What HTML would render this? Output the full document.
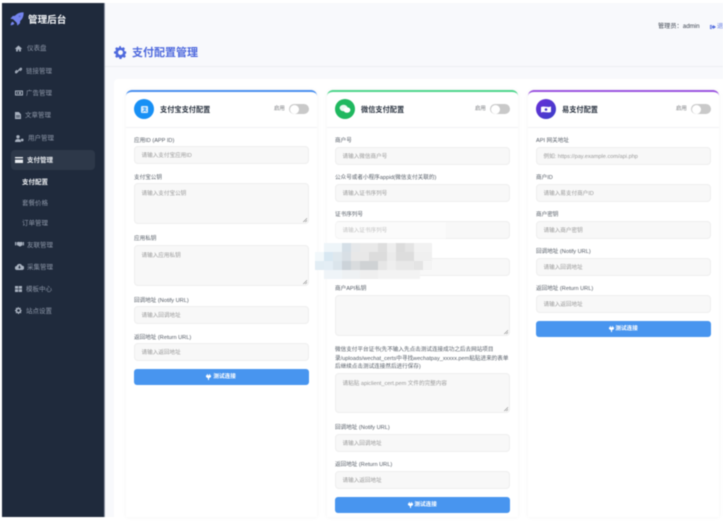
<!DOCTYPE html>
<html lang="zh-CN">
<head>
<meta charset="utf-8">
<title>支付配置管理</title>
<style>
html,body{margin:0;padding:0;background:#fff;}
body{width:723px;height:526px;overflow:hidden;position:relative;font-family:"Liberation Sans","Noto Sans CJK SC",sans-serif;}
#p{position:absolute;left:0;top:0;width:723px;height:526px;overflow:hidden;filter:blur(.4px);}
#p div,#p svg{position:absolute;}
#p div{white-space:nowrap;}
.nv{color:#8d97a8;font-size:6.5px;line-height:10px;height:10px;margin-top:1px;}
.ic{fill:#a9b2c0;}
.card{background:#fff;width:191px;height:427px;top:90px;border-top:2px solid;border-radius:6px 6px 0 0;box-sizing:border-box;box-shadow:0 0 5px rgba(0,0,0,.05);}
.hl{height:1px;width:191px;background:#f1f2f4;top:127px;}
.l{color:#555c66;font-size:5.6px;line-height:8px;height:8px;margin-top:1px;}
.f{width:175px;height:18px;background:#f8f8f8;border:.6px solid #eeeeee;border-radius:4px;box-sizing:border-box;color:#999;font-size:5.6px;line-height:18px;padding-left:6.5px;}
.t{height:41px;line-height:8px;padding-top:6px;}
.t::after{content:"";position:absolute;right:1.5px;bottom:1.5px;width:4px;height:4px;background:linear-gradient(135deg,transparent 50%,#999 50%,#999 60%,transparent 60%,transparent 75%,#999 75%,#999 85%,transparent 85%);}
.btn{width:175px;height:16px;background:#4895ef;border-radius:3px;color:#fff;font-size:5.6px;line-height:17px;text-align:center;font-weight:700;}
.tt{color:#2a3340;font-size:7.2px;font-weight:700;line-height:12px;height:12px;top:104px;}
.en{color:#77797d;font-size:5.4px;line-height:8px;top:105px;}
.tg{width:20px;height:10px;border-radius:5px;background:#c9c9c9;top:104px;}
.tg i{position:absolute;left:1px;top:.5px;width:9px;height:9px;background:#fff;border-radius:50%;}
.cir{width:20px;height:20px;border-radius:50%;top:99px;}
.m{height:9px;}
</style>
</head>
<body>
<div id="p">
  <!-- background -->
  <div style="left:2px;top:3px;width:721px;height:514px;background:#f8f9fc"></div>
  <div style="left:104px;top:66px;width:619px;height:1px;background:#eceef2"></div>
  <div style="left:104px;top:3px;width:1px;height:514px;background:#8c94a3"></div>
  <div style="left:114px;top:79px;width:609px;height:438px;background:#fff;border-radius:4px 0 0 0"></div>

  <!-- sidebar -->
  <div style="left:2px;top:3px;width:102px;height:514px;background:#1f2a3c"></div>
  <svg style="left:10px;top:12px" width="14" height="14" viewBox="0 0 14 14"><path fill="#7484ee" d="M13.6.4C10 .2 7 1.4 5 3.8L2.7 4 .4 6.6l2.7.6 3.7 3.7.6 2.7 2.6-2.3.2-2.3c2.4-2 3.6-5 3.4-8.6zM2.6 9.6C1.4 10 .8 11.4.6 13.4c2-.2 3.4-.8 3.8-2z"/><circle cx="9.6" cy="4.4" r="1" fill="#5a68c8"/></svg>
  <div style="left:28px;top:13.5px;color:#f2f4f7;font-size:9.6px;font-weight:700;line-height:13px">管理后台</div>

  <div style="left:11px;top:150px;width:84px;height:20px;background:#2d3849;border-radius:4px"></div>

  <svg class="ic" style="left:15px;top:45px" width="7" height="7" viewBox="0 0 7 7"><path d="M3.5.5 0 3.6l.5.5.6-.5V6.5h1.8V4.6h1.2v1.9h1.8V3.6l.6.5.5-.5z"/></svg>
  <div class="nv" style="left:27px;top:43px">仪表盘</div>
  <svg class="ic" style="left:15px;top:67px" width="7" height="7" viewBox="0 0 7 7"><path fill="none" stroke="#a9b2c0" stroke-width="1.2" d="M3 4.2 1.6 5.6a.7.7 0 0 1-1-1L2 3.2M4 2.8 5.4 1.4a.7.7 0 0 1 1 1L5 3.8M2.6 4.4l1.8-1.8"/></svg>
  <div class="nv" style="left:26px;top:66px">链接管理</div>
  <svg class="ic" style="left:15px;top:90px" width="8" height="6" viewBox="0 0 8 6"><path fill-rule="evenodd" d="M0 .5h8v5H0zM1 1.5v3h6v-3z"/><path d="M2 2h1v2H2zM4 2h2v2H4z"/></svg>
  <div class="nv" style="left:26px;top:88px">广告管理</div>
  <svg class="ic" style="left:15px;top:112px" width="6" height="7" viewBox="0 0 6 7"><path d="M0 0h3.8L6 2.2V7H0z"/><path fill="#1f2a3c" d="M1 3.4h4v.6H1zM1 4.8h4v.6H1z"/></svg>
  <div class="nv" style="left:25px;top:110px">文章管理</div>
  <svg class="ic" style="left:15px;top:135px" width="9" height="7" viewBox="0 0 9 7"><circle cx="3" cy="1.8" r="1.7"/><path d="M0 7c0-2 1-3 3-3s3 1 3 3z"/><circle cx="7.2" cy="5" r="1.4"/></svg>
  <div class="nv" style="left:28px;top:133px">用户管理</div>
  <svg style="left:15px;top:157px" width="8" height="6" viewBox="0 0 8 6"><path fill="#e8ebef" d="M0 0h8v1.4H0zM0 2.6h8V6H0z"/></svg>
  <div class="nv" style="left:27px;top:155px;color:#e9ecf0;font-weight:700">支付管理</div>

  <div class="nv" style="left:22px;top:177px;color:#f0f2f5;font-weight:700">支付配置</div>
  <div class="nv" style="left:22px;top:198px">套餐价格</div>
  <div class="nv" style="left:22px;top:218px">订单管理</div>

  <svg class="ic" style="left:15px;top:241px" width="9" height="6" viewBox="0 0 9 6"><path d="M0 1h1.2v3.4H0zM7.8 1H9v3.4H7.8zM1.8 1.2 4 .8l1 .5 1-.5 1.4.4v3L5 5.6 1.8 4z"/></svg>
  <div class="nv" style="left:27px;top:240px">友联管理</div>
  <svg class="ic" style="left:15px;top:263px" width="9" height="7" viewBox="0 0 9 7"><path d="M2 7a2 2 0 0 1-.3-4A2.8 2.8 0 0 1 7 2.6 2.2 2.2 0 0 1 7 7z"/><path fill="#1f2a3c" d="M4 2.6h1v1.6h1L4.5 5.8 3 4.2h1z"/></svg>
  <div class="nv" style="left:27px;top:262px">采集管理</div>
  <svg class="ic" style="left:15px;top:286px" width="7" height="6" viewBox="0 0 7 6"><path d="M0 0h3.2v2.6H0zM3.8 0H7v2.6H3.8zM0 3.2h3.2V6H0zM3.8 3.2H7V6H3.8z"/></svg>
  <div class="nv" style="left:26px;top:284px">模板中心</div>
  <svg class="ic" style="left:15px;top:307px" width="7" height="7" viewBox="0 0 16 16"><path d="M15 9.3V6.7l-2-.4-.6-1.4 1.1-1.7-1.8-1.8-1.7 1.1-1.4-.6L8.3 0H6.7l-.4 1.9-1.4.6-1.7-1.1-1.8 1.8 1.1 1.7-.6 1.4L0 6.7v2.6l1.9.4.6 1.4-1.1 1.7 1.8 1.8 1.7-1.1 1.4.6.4 1.9h2.6l.4-1.9 1.4-.6 1.7 1.1 1.8-1.8-1.1-1.7.6-1.4zM8 11a3 3 0 1 1 0-6 3 3 0 0 1 0 6z"/></svg>
  <div class="nv" style="left:26px;top:306px">站点设置</div>

  <!-- top bar -->
  <div style="left:658px;top:23px;color:#3d4450;font-size:6.2px;line-height:8px">管理员：admin</div>
  <svg style="left:710px;top:24px" width="6" height="6" viewBox="0 0 6 6"><path fill="#4e69dd" d="M0 1h2v.8H.8v2.4H2V5H0zM3 1l3 2-3 2V3.8H1.4V2.2H3z"/></svg>
  <div style="left:717px;top:23px;color:#6a80e4;font-size:6.2px;line-height:8px">退出</div>

  <!-- title -->
  <svg style="left:114px;top:46px" width="13" height="13" viewBox="0 0 16 16"><path fill="#4e69dd" d="M15 9.3V6.7l-2-.4-.6-1.4 1.1-1.7-1.8-1.8-1.7 1.1-1.4-.6L8.3 0H6.7l-.4 1.9-1.4.6-1.7-1.1-1.8 1.8 1.1 1.7-.6 1.4L0 6.7v2.6l1.9.4.6 1.4-1.1 1.7 1.8 1.8 1.7-1.1 1.4.6.4 1.9h2.6l.4-1.9 1.4-.6 1.7 1.1 1.8-1.8-1.1-1.7.6-1.4zM8 11a3 3 0 1 1 0-6 3 3 0 0 1 0 6z"/></svg>
  <div style="left:132px;top:46px;color:#4e69dd;font-size:11px;font-weight:700;line-height:15px">支付配置管理</div>

  <!-- card 1 -->
  <div class="card" style="left:126px;border-color:#4a90f0"></div>
  <div class="hl" style="left:126px"></div>
  <div class="cir" style="left:134px;background:#1890f5"></div>
  <svg style="left:140.5px;top:106px" width="7" height="7" viewBox="0 0 8 8"><rect width="8" height="8" rx="1.2" fill="#d8ecfd"/><path fill="none" stroke="#1890f5" stroke-width=".8" d="M2 2.2h4M4 1.4v2.4M1.6 6.4C3.4 6 5 5 5.6 2.8M3 4.4l3.6 2"/></svg>
  <div class="tt" style="left:160px">支付宝支付配置</div>
  <div class="en" style="left:274px">启用</div>
  <div class="tg" style="left:289px"><i></i></div>

  <div class="l" style="left:134px;top:136px">应用ID (APP ID)</div>
  <div class="f" style="left:134px;top:146px">请输入支付宝应用ID</div>
  <div class="l" style="left:134px;top:173px">支付宝公钥</div>
  <div class="f t" style="left:134px;top:183px">请输入支付宝公钥</div>
  <div class="l" style="left:134px;top:234px">应用私钥</div>
  <div class="f t" style="left:134px;top:245px">请输入应用私钥</div>
  <div class="l" style="left:134px;top:296px">回调地址 (Notify URL)</div>
  <div class="f" style="left:134px;top:306px">请输入回调地址</div>
  <div class="l" style="left:134px;top:333px">返回地址 (Return URL)</div>
  <div class="f" style="left:134px;top:343px">请输入返回地址</div>
  <div class="btn" style="left:134px;top:369px">&nbsp;&nbsp;&nbsp;&nbsp;测试连接</div>
  <svg style="left:206px;top:374px" width="5" height="6" viewBox="0 0 5 6"><path fill="#fff" d="M0 1.2h1V0h.8v1.2h1.4V0H4v1.2h1V3L3 4.2V6H2V4.2L0 3z"/></svg>

  <!-- card 2 -->
  <div class="card" style="left:327px;border-color:#4fd68d"></div>
  <div class="hl" style="left:327px"></div>
  <div class="cir" style="left:335px;background:#1fb85f"></div>
  <svg style="left:339px;top:104px" width="12" height="10" viewBox="0 0 12 10"><ellipse cx="4.6" cy="4" rx="4" ry="3.2" fill="#e8f8ef"/><ellipse cx="8" cy="6" rx="3.4" ry="2.8" fill="#fff"/></svg>
  <div class="tt" style="left:361px">微信支付配置</div>
  <div class="en" style="left:475px">启用</div>
  <div class="tg" style="left:490px"><i></i></div>

  <div class="l" style="left:335px;top:136px">商户号</div>
  <div class="f" style="left:335px;top:147px">请输入微信商户号</div>
  <div class="l" style="left:335px;top:173px">公众号或者小程序appid(微信支付关联的)</div>
  <div class="f" style="left:335px;top:184px">请输入证书序列号</div>
  <div class="l" style="left:335px;top:210px">证书序列号</div>
  <div class="f" style="left:335px;top:221px">请输入证书序列号</div>
  <div class="f" style="left:335px;top:258px"></div>
  <div class="l" style="left:335px;top:284px">商户API私钥</div>
  <div class="f t" style="left:335px;top:295px"></div>
  <div class="l" style="left:335px;top:345px">微信支付平台证书(先不输入先点击测试连接成功之后去网站项目</div>
  <div class="l" style="left:335px;top:354px">录/uploads/wechat_certs中寻找wechatpay_xxxxx.pem粘贴进来的表单</div>
  <div class="l" style="left:335px;top:362px">后继续点击测试连接然后进行保存)</div>
  <div class="f t" style="left:335px;top:373px;height:40px">请粘贴 apiclient_cert.pem 文件的完整内容</div>
  <div class="l" style="left:335px;top:423px">回调地址 (Notify URL)</div>
  <div class="f" style="left:335px;top:434px">请输入回调地址</div>
  <div class="l" style="left:335px;top:460px">返回地址 (Return URL)</div>
  <div class="f" style="left:335px;top:471px">请输入返回地址</div>
  <div class="btn" style="left:335px;top:497px">&nbsp;&nbsp;&nbsp;&nbsp;测试连接</div>
  <svg style="left:408px;top:502px" width="5" height="6" viewBox="0 0 5 6"><path fill="#fff" d="M0 1.2h1V0h.8v1.2h1.4V0H4v1.2h1V3L3 4.2V6H2V4.2L0 3z"/></svg>

  <!-- card 3 -->
  <div class="card" style="left:528px;border-color:#9b55e0"></div>
  <div class="hl" style="left:528px"></div>
  <div class="cir" style="left:536px;background:linear-gradient(135deg,#6a2fd8,#3a3fc8)"></div>
  <svg style="left:541px;top:105.5px" width="10" height="7" viewBox="0 0 10 7"><path fill="#fff" d="M0 1l2-.5 6 .5 2-.5V6l-2 .5-6-.5-2 .5z"/><circle cx="5" cy="3.5" r="1.3" fill="#4a35cc"/></svg>
  <div class="tt" style="left:562px">易支付配置</div>
  <div class="en" style="left:676px">启用</div>
  <div class="tg" style="left:691px"><i></i></div>

  <div class="l" style="left:536px;top:136px">API 网关地址</div>
  <div class="f" style="left:536px;top:147px">例如: https://pay.example.com/api.php</div>
  <div class="l" style="left:536px;top:173px">商户ID</div>
  <div class="f" style="left:536px;top:184px">请输入易支付商户ID</div>
  <div class="l" style="left:536px;top:210px">商户密钥</div>
  <div class="f" style="left:536px;top:221px">请输入商户密钥</div>
  <div class="l" style="left:536px;top:247px">回调地址 (Notify URL)</div>
  <div class="f" style="left:536px;top:258px">请输入回调地址</div>
  <div class="l" style="left:536px;top:284px">返回地址 (Return URL)</div>
  <div class="f" style="left:536px;top:295px">请输入返回地址</div>
  <div class="btn" style="left:536px;top:321px">&nbsp;&nbsp;&nbsp;&nbsp;测试连接</div>
  <svg style="left:609px;top:326px" width="5" height="6" viewBox="0 0 5 6"><path fill="#fff" d="M0 1.2h1V0h.8v1.2h1.4V0H4v1.2h1V3L3 4.2V6H2V4.2L0 3z"/></svg>

  <!-- mosaic -->
  <div style="left:328px;top:222px;width:118px;height:21px;background:rgba(255,255,255,.4)"></div>
  <div class="m" style="left:324px;top:243px;width:18px;background:#eef5f9"></div>
  <div class="m" style="left:342px;top:243px;width:9px;background:#d5dfe7"></div>
  <div class="m" style="left:351px;top:243px;width:9px;background:#e6e8ea"></div>
  <div class="m" style="left:360px;top:243px;width:18px;background:#e9e9e9"></div>
  <div class="m" style="left:378px;top:243px;width:9px;background:#dedede"></div>
  <div class="m" style="left:387px;top:243px;width:9px;background:#eeeeee"></div>
  <div class="m" style="left:396px;top:243px;width:9px;background:#dcdcdc"></div>
  <div class="m" style="left:405px;top:243px;width:9px;background:#e4e4e4"></div>
  <div class="m" style="left:414px;top:243px;width:18px;background:#f2f2f2"></div>
  <div class="m" style="left:315px;top:252px;width:9px;background:#f2f8fb"></div>
  <div class="m" style="left:324px;top:252px;width:9px;background:#d8e8f2"></div>
  <div class="m" style="left:333px;top:252px;width:9px;background:#dfe8ee"></div>
  <div class="m" style="left:342px;top:252px;width:9px;background:#d8dfe5"></div>
  <div class="m" style="left:351px;top:252px;width:18px;background:#e8e8e8"></div>
  <div class="m" style="left:369px;top:252px;width:18px;background:#dcdcdc"></div>
  <div class="m" style="left:387px;top:252px;width:9px;background:#ebebeb"></div>
  <div class="m" style="left:396px;top:252px;width:18px;background:#dddddd"></div>
  <div class="m" style="left:414px;top:252px;width:18px;background:#f0f0f0"></div>
  <div class="m" style="left:315px;top:261px;width:9px;background:#e2edf4"></div>
  <div class="m" style="left:324px;top:261px;width:9px;background:#e4eef5"></div>
  <div class="m" style="left:333px;top:261px;width:9px;background:#dbe5ec"></div>
  <div class="m" style="left:342px;top:261px;width:9px;background:#ccd3d9"></div>
  <div class="m" style="left:351px;top:261px;width:9px;background:#d9dcde"></div>
  <div class="m" style="left:360px;top:261px;width:18px;background:#cfd2d4"></div>
  <div class="m" style="left:378px;top:261px;width:9px;background:#e6e6e6"></div>
  <div class="m" style="left:387px;top:261px;width:9px;background:#eeeeee"></div>
  <div class="m" style="left:396px;top:261px;width:18px;background:#e8e8e8"></div>
  <div class="m" style="left:414px;top:261px;width:9px;background:#e4e4e4"></div>
  <div class="m" style="left:423px;top:261px;width:9px;background:#f4f4f4"></div>
  <div class="m" style="left:324px;top:270px;width:18px;background:#eff4f8"></div>
  <div class="m" style="left:342px;top:270px;width:18px;background:#eef1f3"></div>
  <div class="m" style="left:360px;top:270px;width:18px;background:#efefef"></div>
  <div class="m" style="left:378px;top:270px;width:42px;background:#f3f3f3"></div>
</div>
</body>
</html>
